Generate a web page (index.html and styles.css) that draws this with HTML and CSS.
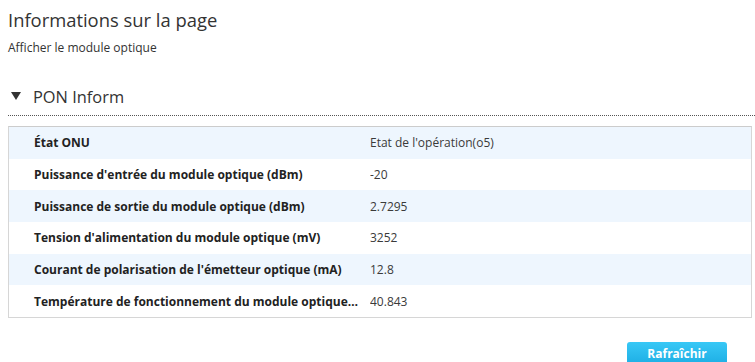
FILE: index.html
```html
<!DOCTYPE html>
<html lang="fr">
<head>
  <meta charset="UTF-8" />
  <title>Informations sur la page</title>
  <link rel="stylesheet" href="styles.css">
</head>
<body>
  <div class="page">
    <h1>Informations sur la page</h1>
    <p class="subtitle">Afficher le module optique</p>

    <div class="section-head">
      <span class="arrow"></span>
      <span class="section-title">PON Inform</span>
    </div>

    <div class="info-box">
      <table class="info">
        <tr><td class="label">État ONU</td><td class="value">Etat de l'opération(o5)</td></tr>
        <tr><td class="label">Puissance d'entrée du module optique (dBm)</td><td class="value">-20</td></tr>
        <tr><td class="label">Puissance de sortie du module optique (dBm)</td><td class="value">2.7295</td></tr>
        <tr><td class="label">Tension d'alimentation du module optique (mV)</td><td class="value">3252</td></tr>
        <tr><td class="label">Courant de polarisation de l'émetteur optique (mA)</td><td class="value">12.8</td></tr>
        <tr><td class="label">Température de fonctionnement du module optique (°C)</td><td class="value">40.843</td></tr>
      </table>
    </div>

    <div class="actions">
      <button class="btn">Rafraîchir</button>
    </div>
  </div>
</body>
</html>
```

FILE: styles.css
```css
body {
  margin: 0;
  font-family: "Open Sans", "Noto Sans", Arial, sans-serif;
  color: #333;
  background: #fff;
}
.page {
  padding: 6px 3px 0 8px;
}
h1 {
  margin: 0;
  font-size: 18.4px;
  font-weight: normal;
  line-height: 28px;
  color: #333;
}
.subtitle {
  margin: 6px 0 0;
  font-size: 12px;
  line-height: 16px;
  color: #333;
}
.section-head {
  display: flex;
  align-items: center;
  height: 30px;
  margin: 25px -3px 0 0;
  padding-bottom: 4px;
  border-bottom: 1px dotted #555;
}
.arrow {
  width: 0;
  height: 0;
  margin: 0 12px 0 3px;
  border-left: 5px solid transparent;
  border-right: 5px solid transparent;
  border-top: 8px solid #333;
}
.section-title {
  font-size: 16.4px;
  color: #333;
}
.info-box {
  margin-top: 10px;
  border: 1px solid #d6d6d6;
  border-top-color: #ccc;
}
.info {
  width: 100%;
  border-collapse: collapse;
  font-size: 12px;
  table-layout: fixed;
}
.info tr {
  height: 31.67px;
}
.info tr:nth-child(odd) {
  background: #eef6fe;
}
.info td {
  padding: 0;
  white-space: nowrap;
  overflow: hidden;
  text-overflow: ellipsis;
}
.info .label {
  width: 327px;
  padding-left: 25px;
  padding-right: 9px;
  font-weight: bold;
  color: #222;
}
.info .value {
  color: #3a3a3a;
}
.actions {
  display: flex;
  justify-content: flex-end;
  padding: 24px 25px 0 0;
}
.btn {
  width: 100px;
  height: 28px;
  padding: 0 0 4px;
  border: none;
  border-radius: 3px;
  background: linear-gradient(#38c8f6, #17a8e0);
  color: #fff;
  font-family: inherit;
  font-size: 12px;
  font-weight: bold;
  cursor: pointer;
}
```
